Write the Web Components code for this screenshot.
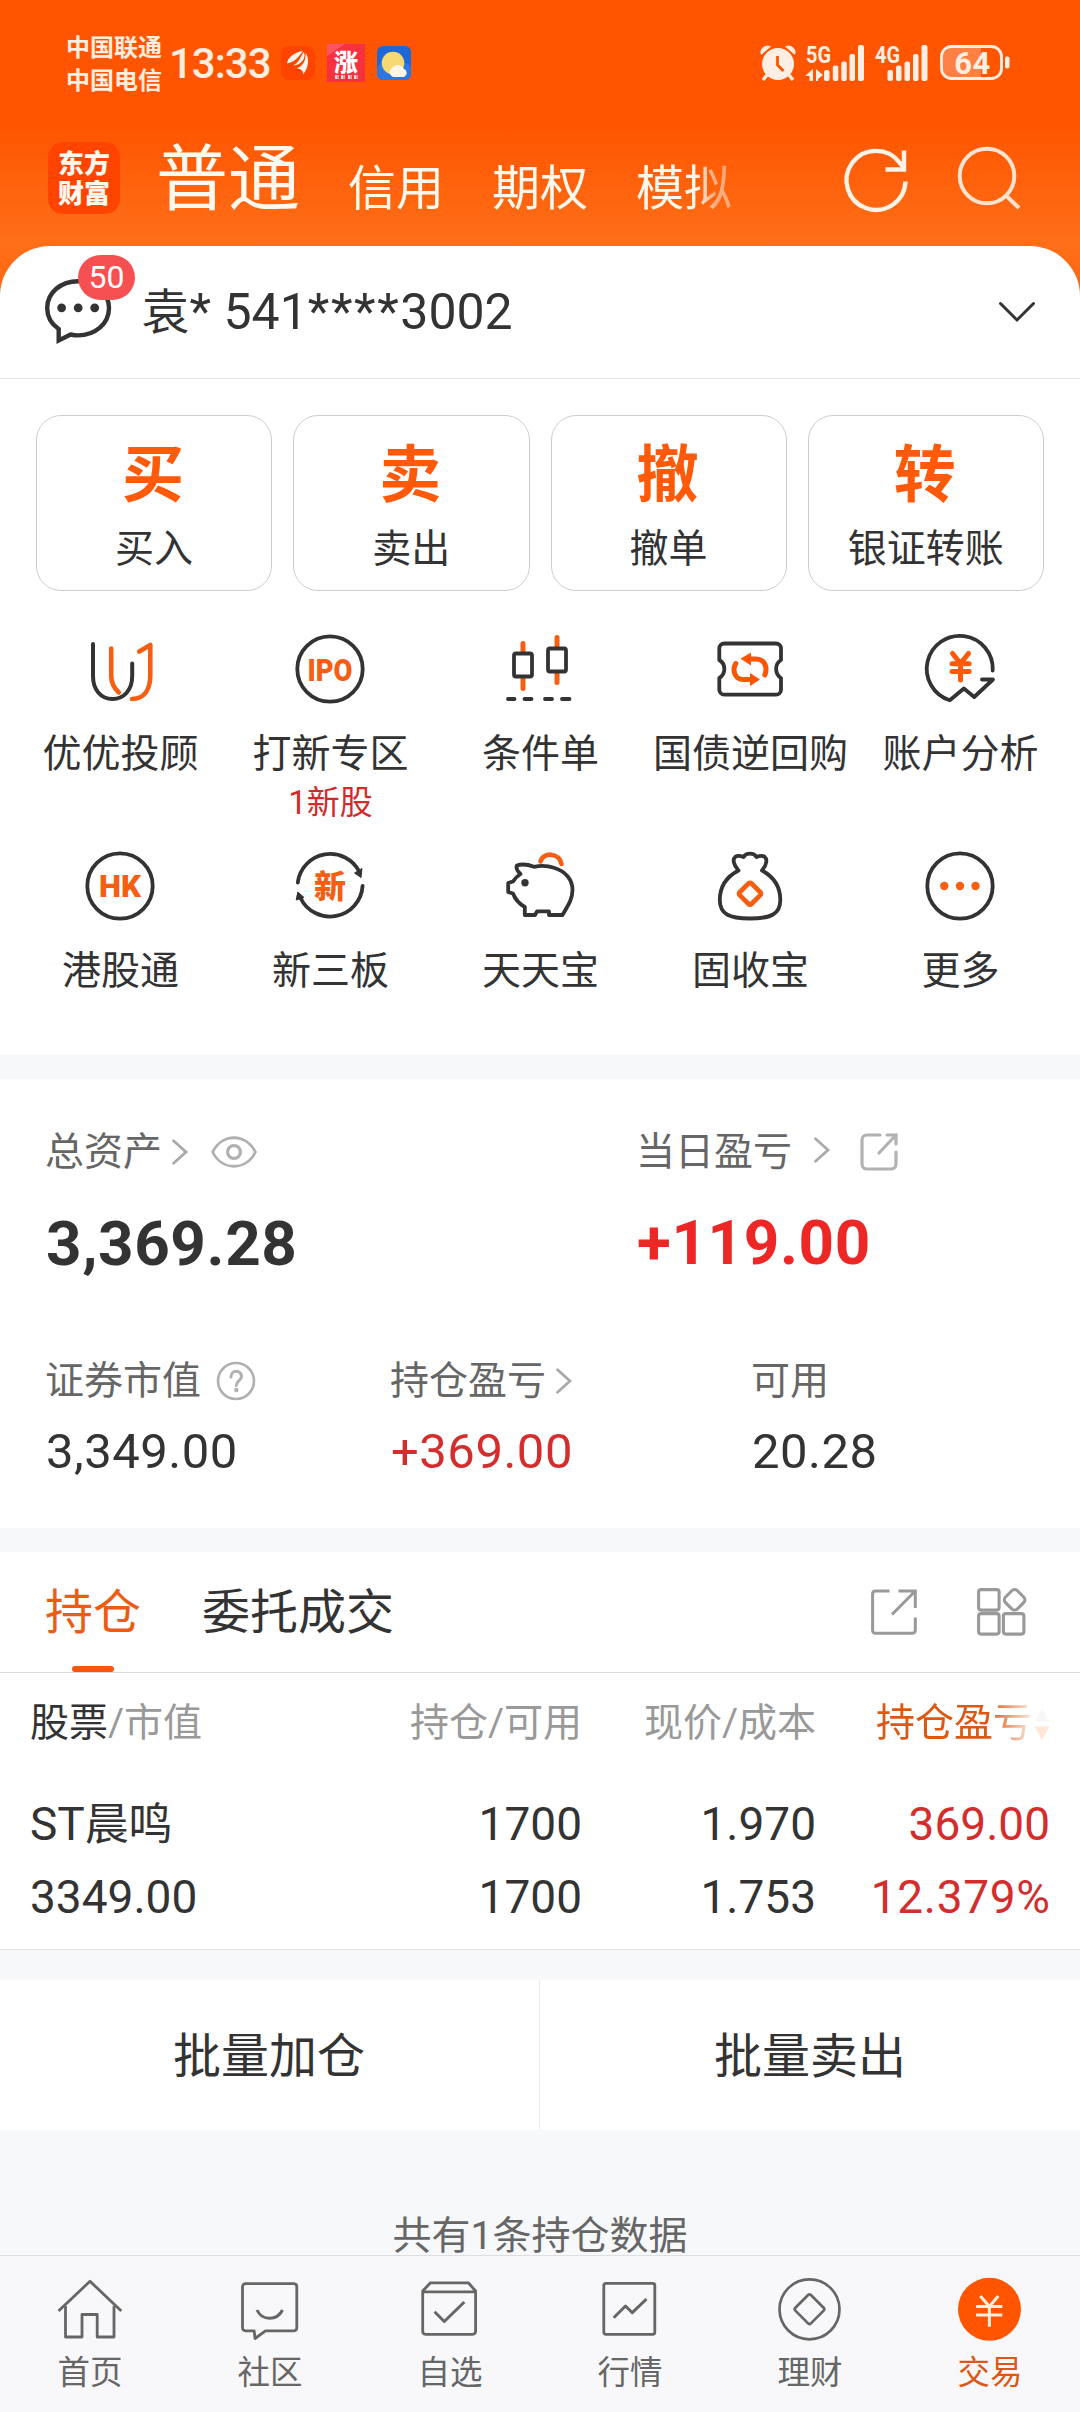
<!DOCTYPE html>
<html lang="zh-CN">
<head>
<meta charset="utf-8">
<title>交易</title>
<style>
html,body{margin:0;padding:0}
body{width:1080px;height:2412px;overflow:hidden;background:#f7f8fa;color:#333;
font-family:Roboto,"Noto Sans CJK SC",sans-serif;font-size:39px;line-height:52px}
</style>
</head>
<body>
<trade-app></trade-app>
<script>
const ICONS = {
  refresh:[64,64,`<g fill="none" stroke="#fff3e6" stroke-width="4.4"><path d="M60.500 34.500A29.500 29.500 0 1 1 54.500 15.500L58.500 20"/><path d="M59 3.500V22.500H40.500"/></g>`],
  search:[64,64,`<g fill="none" stroke="#ffe3cf" stroke-width="4"><circle cx="29" cy="31" r="27.3"/><path d="M48 50.5L61 63"/></g>`],
  bubble:[68,68,`<path d="M13.7 50V61.5L25.5 55.5C28 56 31 56.4 33 56.4C50 56.4 64 45 64 29C64 13.5 50 2.2 33 2.2C16 2.2 2.2 13.5 2.2 29C2.2 38 7 45.5 13.7 50Z" fill="none" stroke="#333" stroke-width="4.4"/><g fill="#333"><circle cx="16.6" cy="28.8" r="4.4"/><circle cx="33.2" cy="28.8" r="4.4"/><circle cx="49.7" cy="28.8" r="4.4"/></g>`],
  down:[38,24,`<path d="M2.5 3.5L19 20L35.5 3.5" fill="none" stroke="#333" stroke-width="3" stroke-linecap="round"/>`],
  more:[16,26,`<path d="M1.5 1.8L14 13L1.5 24.2" fill="none" stroke="#aaa" stroke-width="2.8" stroke-linecap="round"/>`],
  eye:[46,32,`<g fill="none" stroke="#b0b0b0" stroke-width="2.8"><path d="M1.6 16C11 -3 35 -3 44.4 16C35 35 11 35 1.6 16Z" stroke-linejoin="round"/><circle cx="23" cy="16" r="6.4" stroke-width="3.2"/></g>`],
  help:[40,40,`<g fill="none" stroke="#b0b0b0" stroke-width="2.6"><circle cx="20" cy="20" r="18"/><path d="M15 16C15 8.500 25.500 8.500 25.500 15.500C25.500 19.500 20.300 19.800 20.300 24.500" stroke-width="3" stroke-linecap="round"/></g><circle cx="20.300" cy="29" r="2.200" fill="#b0b0b0"/>`],
  share:[38,38,`<g fill="none" stroke="#b2b2b2" stroke-width="3.200" stroke-linecap="round"><path d="M20 2H7A5 5 0 0 0 2 7V31A5 5 0 0 0 7 36H31A5 5 0 0 0 36 31V19"/><path d="M27 2H36V11M36 2L19 20"/></g>`],
  export:[46,46,`<g fill="none" stroke="#999" stroke-width="3"><path d="M18.500 2H4.500A3 3 0 0 0 1.600 5V41.500A3 3 0 0 0 4.500 44.300H41.500A3 3 0 0 0 44.300 41.500V28.500"/><path d="M27.500 2H44.300V19M44 2.300L21 25.500"/></g>`],
  widgets:[50,48,`<g fill="none" stroke="#999" stroke-width="3.100"><rect x="1.600" y="1.600" width="20.500" height="20.500" rx="2.500"/><rect x="1.600" y="25.600" width="20.500" height="20.500" rx="2.500"/><rect x="26.400" y="25.600" width="20.500" height="20.500" rx="2.500"/><rect x="29.200" y="3.400" width="16.800" height="16.800" rx="4" transform="rotate(45 37.600 11.800)"/></g>`],
  uu:[72,72,`<g fill="none" stroke-linecap="round" stroke-linejoin="round"><path d="M9 11V43C9 57 17 66 28.500 66S48.200 57 48.200 43V30.500" stroke="#333" stroke-width="4"/><path d="M27.200 15.500V43C27.200 50 30 55 34.800 59.500M55.300 18.500L66.300 12V42C66.300 57 60 66 48 66" stroke="#f65e12" stroke-width="4.600"/></g>`],
  ipo:[72,72,`<circle cx="36" cy="36" r="32.700" fill="none" stroke="#333" stroke-width="3.800"/><text x="36" y="47.500" text-anchor="middle" textLength="45" lengthAdjust="spacingAndGlyphs" font-size="32" font-weight="900" fill="#f65e12">IPO</text>`],
  candle:[72,72,`<g fill="none" stroke-linecap="round"><path d="M19 10.500V18M19 46V55.500M53 4.500V13M53 41V49.500" stroke="#f65e12" stroke-width="5"/><g stroke="#333" stroke-width="3.800"><rect x="10" y="20.500" width="18" height="23" rx="2"/><rect x="44" y="15.500" width="18" height="23" rx="2"/><path d="M4 66H10.500M20.500 66H27.500M41 66H48M58 66H65.500"/></g></g>`],
  repo:[72,72,`<path d="M10.300 10.500H62A5 5 0 0 1 67 15.500V27C60.500 31 60.500 41 67 45V56.700A5 5 0 0 1 62 61.700H10.300A5 5 0 0 1 5.300 56.700V45C12 41 12 31 5.300 27V15.500A5 5 0 0 1 10.300 10.500Z" fill="none" stroke="#333" stroke-width="3.800" stroke-linejoin="round"/><g fill="none" stroke="#ff5500" stroke-width="5" stroke-linecap="round"><path d="M35 26H42C50.500 26 54 34 50.800 42"/><path d="M38 46.500H29C21.500 46.500 17.500 38 21.800 30.500"/></g><path d="M26.500 25.800L37 19.500V32.500ZM46 46.600L36 40V53Z" fill="#ff5500"/>`],
  analyse:[72,72,`<path d="M68.700 37.500A33 33 0 1 0 25.800 67.300L39.900 55.500L50.200 64L69 46.500H58" fill="none" stroke="#333" stroke-width="3.800" stroke-linecap="round" stroke-linejoin="round"/><path d="M28.500 20.500L36.500 30.500L44.500 20.500M36.500 31V47M28 30.800H45.200M28 38.600H45.200" fill="none" stroke="#ff5a08" stroke-width="5" stroke-linecap="round"/>`],
  hk:[72,72,`<circle cx="36" cy="36" r="32.700" fill="none" stroke="#333" stroke-width="3.800"/><text x="36" y="47.300" text-anchor="middle" textLength="42" lengthAdjust="spacingAndGlyphs" font-size="32" font-weight="900" fill="#f65e12">HK</text>`],
  neeq:[72,72,`<g fill="none" stroke="#333" stroke-width="3.800" stroke-linecap="round"><path d="M3.800 32.500A32.700 32.700 0 0 1 65.500 22"/><path d="M68.600 36A32.700 32.700 0 0 1 6.500 48"/></g><path d="M67 27.500L60.500 23L68 18.500ZM3.800 42L10 47.500L2.200 50Z" fill="#333" stroke="#333" stroke-linejoin="round"/><text x="36" y="48" text-anchor="middle" font-size="32" font-weight="900" fill="#f65e12">新</text>`],
  pig:[72,72,`<path d="M16.500 24C13 21 12 18 12.800 15.500C17 14 24 14.500 30 16.800C36 15.500 44 15.800 50 17.800C62 21.500 68.500 30 68.500 40C68.500 50 63 57 58.500 65H45V61.300H33L31 65H20.800V57C14 53 11 49 9 43.500L4.200 42V33L9 31.500C11 28 13.500 26 16.500 24Z" fill="none" stroke="#333" stroke-width="3.800" stroke-linejoin="round"/><circle cx="21" cy="32.700" r="3.700" fill="#333"/><path d="M36.500 11.500C38 6.500 43 4.300 47 4.700C53 5.300 56.800 9 57.500 14" fill="none" stroke="#f65e12" stroke-width="4.600" stroke-linecap="round"/>`],
  bag:[72,72,`<path d="M24.500 20.500C19 14.500 18.500 9 21.500 6.700C23.500 5.500 27 6 29.500 7C32 2.500 40 2.500 42.500 7C45 6 48.500 5.500 50.500 6.700C53.500 9 53 14.500 48 20.500C60 27 66.300 36 66.300 50C66.300 64 57 68.500 36 68.500S5.800 64 5.800 50C5.800 36 12 27 24.500 20.500Z" fill="none" stroke="#333" stroke-width="3.800" stroke-linejoin="round"/><rect x="27.700" y="35.400" width="16.600" height="16.600" rx="2" transform="rotate(45 36 43.700)" fill="none" stroke="#f65e12" stroke-width="4.800"/>`],
  dots:[72,72,`<circle cx="36" cy="36" r="32.700" fill="none" stroke="#333" stroke-width="3.800"/><g fill="#f65e12"><circle cx="20.300" cy="36" r="4.200"/><circle cx="36" cy="36" r="4.200"/><circle cx="51.500" cy="36" r="4.200"/></g>`],
  home:[64,64,`<g fill="none" stroke="#666" stroke-width="2.800" stroke-linejoin="round"><path d="M.500 34L32 4.300L63.300 34"/><path d="M7.500 29V60H24V37.500H39.200V60H56V29"/></g>`],
  chat:[64,64,`<g fill="none" stroke="#666" stroke-width="2.800" stroke-linejoin="round"><path d="M7 6.700H56A3 3 0 0 1 58.800 9.700V51A3 3 0 0 1 56 53.800H27.500L17 61.500L16.200 53.800H7.500A3 3 0 0 1 4.500 51V9.700A3 3 0 0 1 7.500 6.700Z"/><path d="M19 33C24 44 39 44 44.500 33" stroke-width="3"/></g>`],
  pick:[64,64,`<g fill="none" stroke="#666" stroke-width="2.800" stroke-linejoin="round"><path d="M12.500 5.800H50.300L57.600 14V54.500A3 3 0 0 1 54.600 57.300H7.500A3 3 0 0 1 4.700 54.500V14ZM4.700 14.800H57.600"/><path d="M16.600 34.700L26.300 44.500L46.300 25" stroke-width="3"/></g>`],
  quote:[64,64,`<g fill="none" stroke="#666" stroke-width="2.800" stroke-linejoin="round"><rect x="5.800" y="6.300" width="51" height="51" rx="2"/><path d="M15.700 40.700L27.500 29L34.300 35.700L48.500 22" stroke-width="3"/></g>`],
  wealth:[64,64,`<g fill="none" stroke="#666" stroke-width="2.700" stroke-linejoin="round"><circle cx="31.500" cy="32.300" r="30"/><rect x="20.500" y="21.200" width="22" height="22" rx="2" transform="rotate(45 31.500 32.200)"/></g>`],
  trade:[64,64,`<circle cx="31.500" cy="32.300" r="31.500" fill="#ff5500"/><path d="M22.300 19L31.400 29.500L40.300 19M31.400 29V49.700M18 29.500H44.300M18 38H44.300" fill="none" stroke="#ffeedd" stroke-width="3"/>`],
  sort:[16,34,`<path d="M8 1L15.500 14.500H.500Z" fill="#ccc"/><path d="M8 33L.500 19.500H15.500Z" fill="#ff5500"/>`],
  app:[34,34,`<rect width="34" height="34" rx="8" fill="#ff4400"/><g fill="#fff4ea"><path d="M6 17.500C6 12 14 6 22 5C18 10 15 16 6 17.500Z"/><path d="M12 19.500C18 17 20 10 22.500 6C25.500 10 22 19 12 19.500Z"/><path d="M15.500 22.500C23 20 25 13 24.500 7C28.500 11 28 22 22 28.500C22.500 25 20 22.500 15.500 22.500Z"/></g>`],
  rise:[38,38,`<rect width="38" height="38" fill="#f8303f"/><path d="M0 0H18L0 12Z" fill="#ff5464"/><text x="19" y="26.500" text-anchor="middle" font-size="24" font-weight="900" fill="#fff">涨</text><path d="M8 33H12M14 33H18M21 33H25M27 33H31" stroke="#ffd9dc" stroke-width="4" stroke-dasharray="2.500 .8"/>`],
  weather:[34,34,`<rect width="34" height="34" rx="6" fill="#1d68d4"/><rect y="17" width="34" height="17" rx="6" fill="#2c78e2"/><circle cx="16" cy="17" r="11.300" fill="#f5d972"/><path d="M16 31A5 5 0 0 1 15 22A7 7 0 0 1 27 23A4.300 4.300 0 0 1 27 31Z" fill="#fff7e4"/>`],
  alarm:[36,36,`<g fill="#ffeee4"><circle cx="18" cy="19" r="16"/><path d="M1 10A7 7 0 0 1 11 1.500ZM35 10A7 7 0 0 0 25 1.500Z"/></g><path d="M7 30L3 35M29 30L33 35" stroke="#ffeee4" stroke-width="3.400"/><path d="M17.500 11V20L23.500 26" fill="none" stroke="#ff5500" stroke-width="2.800"/>`],
  sig5:[60,37,`<g fill="#ffeee4"><text x="0" y="17.500" font-size="23" font-weight="700" textLength="25" lengthAdjust="spacingAndGlyphs">5G</text><path d="M7 24V36H3.500V31H-1ZM10 24V36H12V34L17 30Z"/><rect x="18" y="25" width="5.500" height="11" rx="2"/><rect x="26.800" y="20.500" width="5.500" height="15.500" rx="2"/><rect x="35.300" y="16.500" width="5.500" height="19.500" rx="2"/><rect x="43.500" y="9" width="5.500" height="27" rx="2"/><rect x="52" y="0" width="6" height="36" rx="2"/></g>`],
  sig4:[54,37,`<g fill="#ffeee4"><text x="0" y="17.500" font-size="23" font-weight="700" textLength="25" lengthAdjust="spacingAndGlyphs">4G</text><rect x="12.500" y="25" width="5.500" height="11" rx="2"/><rect x="21" y="20.500" width="5.500" height="15.500" rx="2"/><rect x="29.500" y="16.500" width="5.500" height="19.500" rx="2"/><rect x="38" y="9" width="5.500" height="27" rx="2"/><rect x="46.500" y="0" width="6" height="36" rx="2"/></g>`],
  battery:[71,36,`<path d="M12 3H41V33H12A9 9 0 0 1 3 24V12A9 9 0 0 1 12 3Z" fill="#ff8043"/><rect x="1.500" y="1.500" width="60" height="32" rx="10" fill="none" stroke="#ffeee4" stroke-width="2.800"/><rect x="65" y="11.500" width="4.500" height="12" rx="2" fill="#ffeee4"/><text x="32.500" y="28.500" text-anchor="middle" font-size="31" font-weight="700" letter-spacing=".5" fill="#ffeee4">64</text>`]
};

const define = (tag, css, html) => customElements.define(tag, class extends HTMLElement {
  constructor(){
    super();
    this.attachShadow({mode:'open'});
    const t = document.createElement('template');
    t.innerHTML = `<style>*{box-sizing:border-box}${css}</style>` + (typeof html === 'function' ? html(this) : html);
    this.shadowRoot.append(t.content.cloneNode(true));
  }
});

define('ui-icon', `:host{display:block;flex:none;line-height:0}svg{display:block;overflow:visible}`, el => {
  const [w,h,body] = ICONS[el.getAttribute('name')];
  return `<svg width="${w}" height="${h}" viewBox="0 0 ${w} ${h}">${body}</svg>`;
});

define('status-bar', `
:host{display:flex;height:126px;padding:0 69px 0 66px;align-items:center;color:#ffeee0}
.carrier{font-size:24px;line-height:33px;font-weight:700;margin-right:7px;padding-top:3px}
.time{font-size:42px;line-height:48px;font-weight:500;letter-spacing:-1px;width:108px;padding-top:2px}
.apps{display:flex;align-items:center;margin-left:4px;gap:12px}
.sys{display:flex;align-items:center;margin-left:auto}
ui-icon+ui-icon{margin-left:var(--g,0)}`, `
<div class="carrier">中国联通<br>中国电信</div><div class="time">13:33</div>
<div class="apps"><ui-icon name="app"></ui-icon><ui-icon name="rise"></ui-icon><ui-icon name="weather"></ui-icon></div>
<div class="sys"><ui-icon name="alarm"></ui-icon><ui-icon name="sig5" style="--g:10px"></ui-icon><ui-icon name="sig4" style="--g:9px"></ui-icon><ui-icon name="battery" style="--g:11px"></ui-icon></div>`);

define('nav-header', `
:host{display:flex;height:120px;padding:16px 58px 0 48px;color:#fff9f0;align-items:flex-start}
.logo{width:72px;height:72px;border-radius:15px;background:#ff4400;font-size:26px;line-height:30px;font-weight:900;text-align:center;padding-top:7px;flex:none}
nav{display:flex;gap:48px;margin-left:36px;align-items:flex-start;font-size:48px;line-height:72px;height:88px;width:580px;
-webkit-mask-image:linear-gradient(90deg,#000 538px,rgba(0,0,0,.5) 558px,rgba(0,0,0,.45))}
nav span{padding-top:11px}
b{font-weight:400;font-size:72px;padding-top:2px}
.tools{display:flex;gap:49px;margin:5px 0 0 auto}
ui-icon:last-child{margin-top:-2px}`, `
<div class="logo">东方<br>财富</div><nav><b>普通</b><span>信用</span><span>期权</span><span>模拟</span></nav>
<div class="tools"><ui-icon name="refresh"></ui-icon><ui-icon name="search"></ui-icon></div>`);

define('account-row', `
:host{display:flex;height:133px;border-bottom:1px solid #e2e2e2;align-items:center;padding:0 44px 0 45px}
.msg{position:relative;margin-top:2px}
.badge{position:absolute;left:33px;top:-24px;width:57px;height:45px;border-radius:23px;background:#f75052;color:#fff;font-size:32px;line-height:45px;text-align:center}
.name{font-size:48px;line-height:60px;margin-left:28.5px;white-space:pre}
.chev{margin-left:auto}`, `
<div class="msg"><ui-icon name="bubble"></ui-icon><span class="badge"><slot name="badge"></slot></span></div>
<div class="name"><slot></slot></div><ui-icon class="chev" name="down"></ui-icon>`);

define('quick-card', `
:host{display:block;height:176px;border:1px solid #cdcdcd;border-radius:25px;text-align:center;padding-top:25px}
.big{font-size:62px;line-height:70px;font-weight:700;color:#ff5a0a;margin-right:2px}
.label{margin:13px 0 0 0;line-height:50px}`, el => `<div class="big">${el.getAttribute('glyph')}</div><div class="label"><slot></slot></div>`);

define('fn-item', `
:host{display:flex;flex-direction:column;align-items:center;white-space:nowrap}
.label{line-height:50px;margin-top:24.4px;padding-left:1px}
.sub{font-size:33px;line-height:40px;margin-top:4px;color:#d12c2c;padding-left:1px}`, el => `
<ui-icon name="${el.getAttribute('icon')}"></ui-icon><div class="label"><slot></slot></div><div class="sub"><slot name="sub"></slot></div>`);

define('quick-actions', `
:host{display:block}
.cards{display:grid;grid-template-columns:repeat(4,1fr);gap:21px;padding:36px 36px 0}
.fns{display:grid;grid-template-columns:repeat(5,210px);grid-template-rows:217px 205px;padding:42px 15px 0}`, `
<div class="cards"><quick-card glyph="买">买入</quick-card><quick-card glyph="卖">卖出</quick-card><quick-card glyph="撤">撤单</quick-card><quick-card glyph="转">银证转账</quick-card></div>
<div class="fns"><fn-item icon="uu">优优投顾</fn-item><fn-item icon="ipo">打新专区<span slot="sub">1新股</span></fn-item><fn-item icon="candle">条件单</fn-item><fn-item icon="repo">国债逆回购</fn-item><fn-item icon="analyse">账户分析</fn-item>
<fn-item icon="hk">港股通</fn-item><fn-item icon="neeq">新三板</fn-item><fn-item icon="pig">天天宝</fn-item><fn-item icon="bag">固收宝</fn-item><fn-item icon="dots">更多</fn-item></div>`);

define('asset-cell', `
:host{display:block}
.label{display:flex;align-items:center;height:52px;padding-bottom:2px;line-height:50px;color:#666}
.label ::slotted(ui-icon){margin-bottom:1px}
.value{font-size:49px;line-height:60px;margin:14px 0 0 1px;letter-spacing:.5px}
:host([big]) .value{font-size:62px;line-height:72px;font-weight:700;margin-top:29px;letter-spacing:.6px}
:host([up]) .value{color:#d32d2d}
:host([big][up]) .value{color:#ed2626;margin-top:28px}`, `<div class="label"><slot></slot></div><div class="value"><slot name="value"></slot></div>`);

define('asset-panel', `
:host{display:block;height:449px;background:#fff;padding:48px 0 0 45px}
.top{display:grid;grid-template-columns:591px 1fr}
.bottom{display:grid;grid-template-columns:345px 361px 1fr;margin-top:76px}`, `
<div class="top">
<asset-cell big>总资产<ui-icon name="more" style="margin-left:10px"></ui-icon><ui-icon name="eye" style="margin-left:23px"></ui-icon><span slot="value">3,369.28</span></asset-cell>
<asset-cell big up>当日盈亏<ui-icon name="more" style="margin-left:22px;margin-bottom:5px"></ui-icon><ui-icon name="share" style="margin-left:30px"></ui-icon><span slot="value">+119.00</span></asset-cell></div>
<div class="bottom">
<asset-cell>证券市值<ui-icon name="help" style="margin-left:15px"></ui-icon><span slot="value">3,349.00</span></asset-cell>
<asset-cell up>持仓盈亏<ui-icon name="more" style="margin-left:10px"></ui-icon><span slot="value">+369.00</span></asset-cell>
<asset-cell>可用<span slot="value">20.28</span></asset-cell></div>`);

define('holdings-panel', `
:host{display:block;height:398px;background:#fff;border-bottom:1px solid #e6e6e6}
.tabs{display:flex;height:121px;border-bottom:1px solid #dcdcdc;padding:0 53px 0 45px}
.tab{display:flex;flex-direction:column;align-items:center;font-size:48px;line-height:60px;padding-top:31px;margin-right:61px}
.on{color:#ed5c14}
.on i{width:42px;height:6px;border-radius:3px;background:#f7560c;margin-top:auto}
.tools{margin-left:auto;display:flex;gap:60px;align-items:center}
.grid{display:grid;grid-template-columns:252px 300px 234px 234px;padding:24px 30px 0;text-align:right;font-size:46px;line-height:60px;white-space:nowrap}
.grid>:nth-child(4n+1){text-align:left}
.h{font-size:39px;line-height:52px;color:#999;margin-bottom:45px}
.h b{font-weight:400;color:#333}
.stock span{font-size:44px;line-height:44px;letter-spacing:-.3px}
.sort{display:flex;justify-content:flex-end;align-items:center;color:#dd5812;gap:2px;
-webkit-mask-image:linear-gradient(90deg,#000 172px,rgba(0,0,0,.15) 215px)}
.sort ui-icon{margin-top:2px}
.r2{margin-top:13px}.up{color:#d32d2d}.pct{letter-spacing:.7px;margin-right:-.7px}`, `
<div class="tabs"><div class="tab on">持仓<i></i></div><div class="tab">委托成交</div><div class="tools"><ui-icon name="export"></ui-icon><ui-icon name="widgets"></ui-icon></div></div>
<div class="grid">
<div class="h"><b>股票</b>/市值</div><div class="h">持仓/可用</div><div class="h">现价/成本</div><div class="h sort">持仓盈亏<ui-icon name="sort"></ui-icon></div>
<div class="stock">ST<span>晨鸣</span></div><div>1700</div><div>1.970</div><div class="up">369.00</div>
<div class="r2">3349.00</div><div class="r2">1700</div><div class="r2">1.753</div><div class="r2 up pct">12.379%</div></div>`);

define('batch-actions', `
:host{display:grid;grid-template-columns:1fr 1fr;height:150px;margin-top:30px;background:#fff;font-size:48px;line-height:60px;text-align:center;align-items:stretch}
div{padding:47px 2px 0 0}div+div{border-left:1px solid #eaeaea;margin-left:-1px;padding-right:0}`, `<div>批量加仓</div><div>批量卖出</div>`);

define('tab-item', `
:host{display:flex;flex-direction:column;align-items:center;color:#666;font-size:32.5px;line-height:42px;padding-top:21px}
:host([active]) .t{color:#dc5816}
.t{margin-top:11px}`, el => `<ui-icon name="${el.getAttribute('icon')}"></ui-icon><div class="t"><slot></slot></div>`);

define('tab-bar', `:host{display:grid;grid-template-columns:repeat(6,1fr);height:157px;background:#f8f8fa;border-top:1px solid #dedfe1}`, `
<tab-item icon="home">首页</tab-item><tab-item icon="chat">社区</tab-item><tab-item icon="pick">自选</tab-item><tab-item icon="quote">行情</tab-item><tab-item icon="wealth">理财</tab-item><tab-item icon="trade" active>交易</tab-item>`);

define('trade-app', `
:host{display:block;width:1080px;height:2412px;background:linear-gradient(#ff5500 125px,#ff6e18 240px,#ff6810 300px) 0 0/100% 300px no-repeat #f7f8fa}
.sheet{background:#fff;border-radius:50px 50px 0 0;height:809px}
.gap{height:24px;background:#f7f8fa}
.note{height:125px;padding-top:80px;color:#666;text-align:center}
.n{font-size:50px}.s{letter-spacing:1.6px}`, `
<status-bar></status-bar><nav-header></nav-header>
<div class="sheet"><account-row><span slot="badge">50</span>袁<span class="n">* 541<span class="s">****</span>3002</span></account-row>
<quick-actions></quick-actions></div>
<div class="gap"></div><asset-panel></asset-panel><div class="gap"></div>
<holdings-panel></holdings-panel><batch-actions></batch-actions>
<div class="note">共有1条持仓数据</div><tab-bar></tab-bar>`);
</script>
</body>
</html>
